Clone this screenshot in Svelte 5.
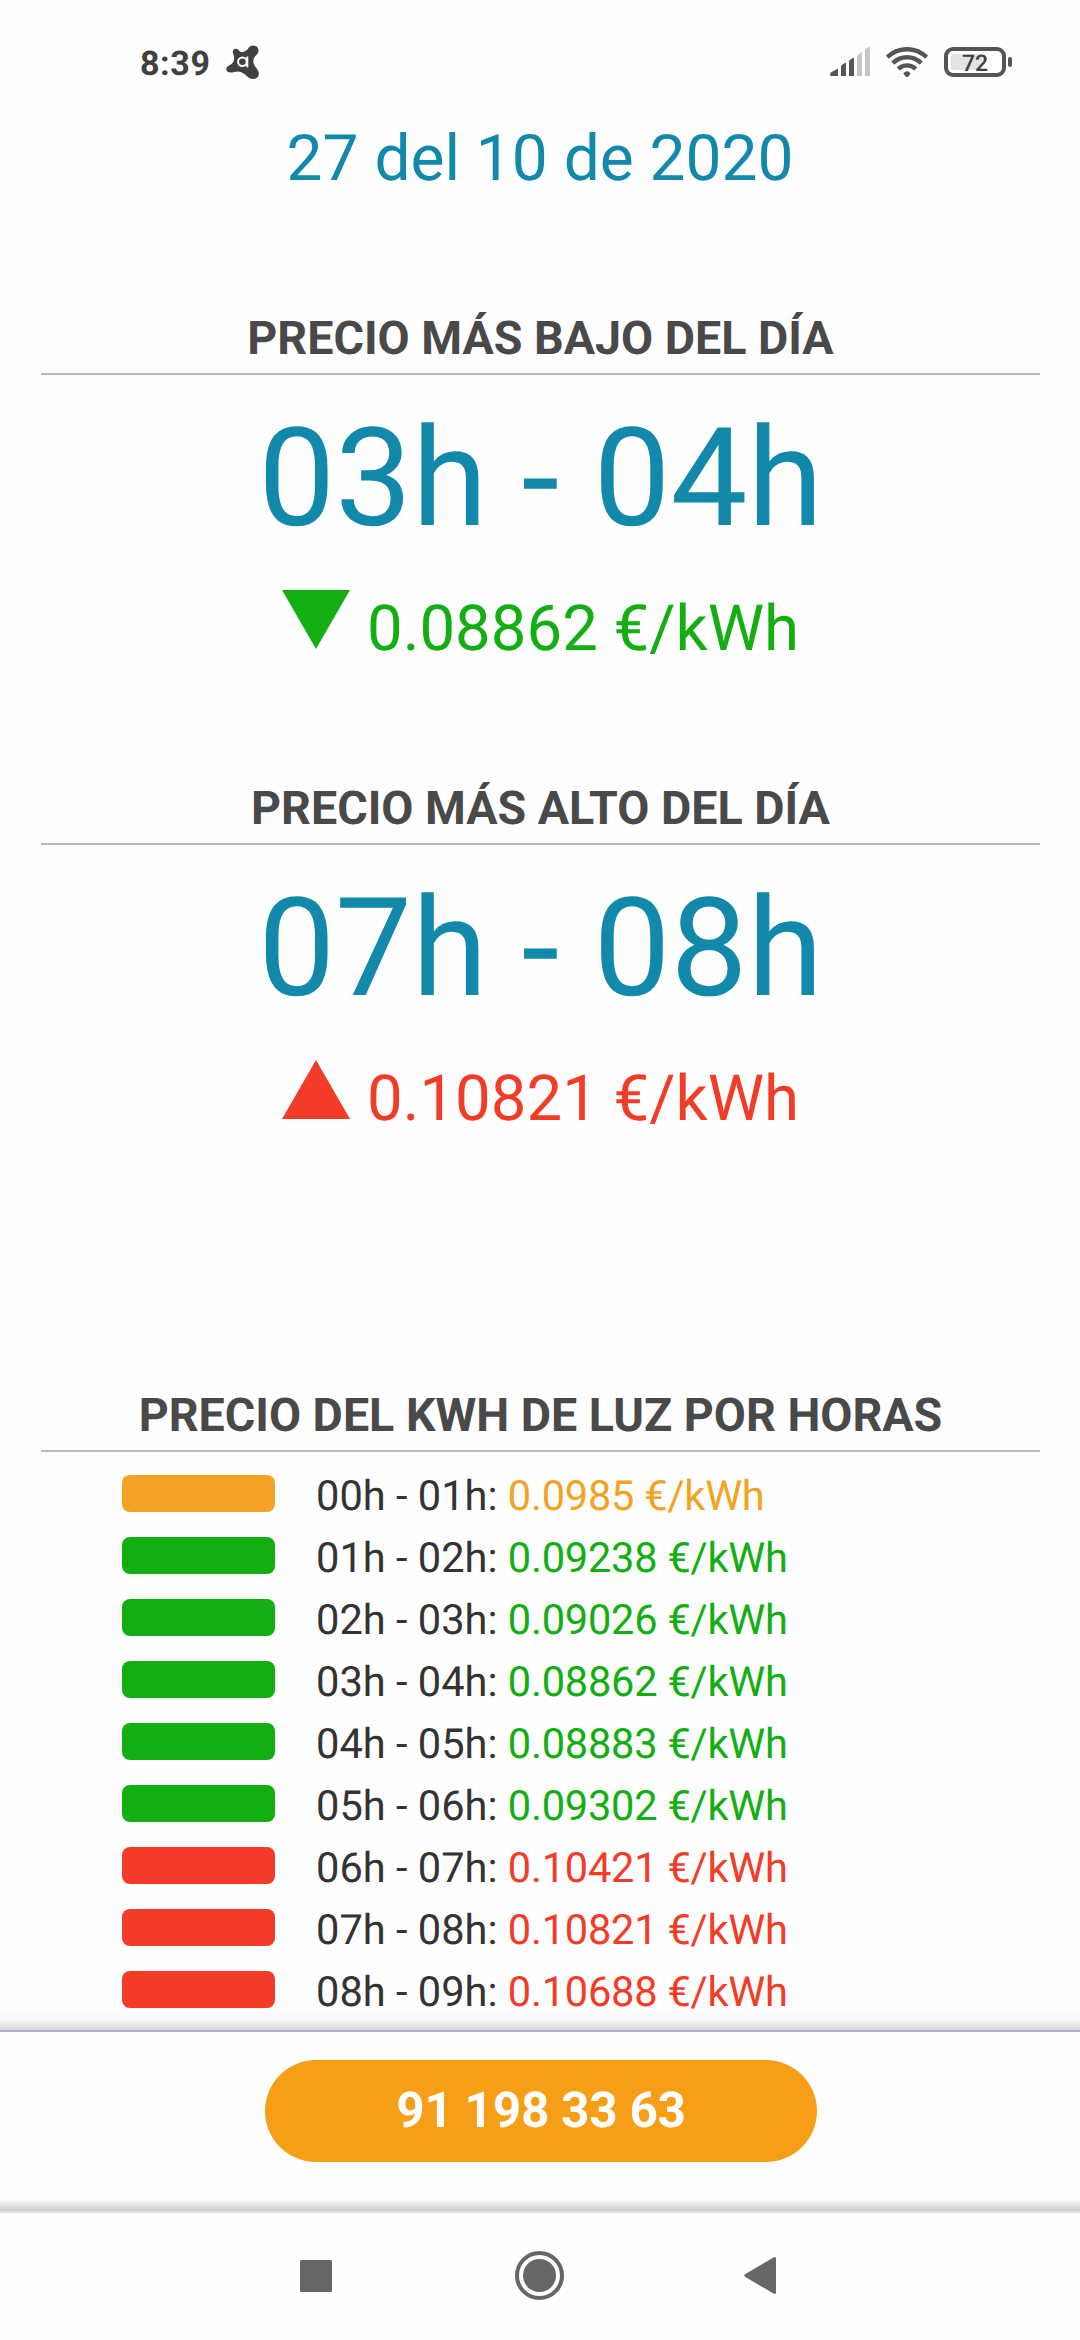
<script>
  const extremes = [
    { title: 'PRECIO MÁS BAJO DEL DÍA', hours: '03h - 04h', price: '0.08862', level: 'low' },
    { title: 'PRECIO MÁS ALTO DEL DÍA', hours: '07h - 08h', price: '0.10821', level: 'high' },
  ];
  const hourly = [
    { hours: '00h - 01h', price: '0.0985', level: 'mid' },
    { hours: '01h - 02h', price: '0.09238', level: 'low' },
    { hours: '02h - 03h', price: '0.09026', level: 'low' },
    { hours: '03h - 04h', price: '0.08862', level: 'low' },
    { hours: '04h - 05h', price: '0.08883', level: 'low' },
    { hours: '05h - 06h', price: '0.09302', level: 'low' },
    { hours: '06h - 07h', price: '0.10421', level: 'high' },
    { hours: '07h - 08h', price: '0.10821', level: 'high' },
    { hours: '08h - 09h', price: '0.10688', level: 'high' },
  ];
</script>

<div class="screen">
  <header class="status">
    <div class="left">
      <span class="clock">8:39</span>
      <svg class="app" viewBox="0 0 34 34" width="34" height="34">
        <path fill="#404040" d="M7 8C5.800 4 11 2 13 5.500C15 8.500 20 7 22.500 3C25 -1 32 0 32.500 5C33 9 29.500 10 28 13C26 17 28.500 21 31 24C35 29 32 34 27 34C22 34 20 29 15 27C11 25.500 8 27.500 4.500 27.500C-0.500 27.500 -1 22.500 3 20.500C8 18 9.500 14 7 8Z" />
        <circle cx="16.400" cy="16.800" r="4.300" fill="none" stroke="#fff" stroke-width="2" />
        <path d="M21.300 11.500V22.300" stroke="#fff" stroke-width="2" />
      </svg>
    </div>
    <div class="right">
      <svg class="signal" viewBox="0 0 40 29" width="40" height="29">
        <path fill="#555" d="M0 27.500Q0 26 1.200 25.200L8 21.500V29H1.500Q0 29 0 27.500ZM11 19.500Q11 18.500 12 17.800L16 15.500V29H11ZM19 14.500Q19 13.500 20 12.800L24 10.500V29H19Z" />
        <path fill="#c6c6c6" d="M27 9.500Q27 8.500 28 7.800L32 5V29H27ZM35 4Q35 2.500 36 1.800L38 0.300Q40 -0.500 40 1V29H35Z" />
      </svg>
      <svg class="wifi" viewBox="0 0 42 30" width="42" height="30">
        <g fill="none" stroke="#555" stroke-width="4.400">
          <path d="M1.300 10.200C12.500 -.500 29.500 -.500 40.700 10.200" />
          <path d="M6.800 16.100C15 8.300 27 8.300 35.200 16.100" />
          <path d="M12.300 22C17.300 17.200 24.700 17.200 29.700 22" />
        </g>
        <path fill="#555" d="M17.300 26.200Q21 22.500 24.700 26.200L22.600 29.200Q21 31 19.400 29.200Z" />
      </svg>
      <svg class="battery" viewBox="0 0 68 30" width="68" height="30">
        <rect x="2" y="2" width="58" height="26" rx="7" fill="#fff" stroke="#555" stroke-width="4" />
        <path fill="#e3e3e3" d="M10 7H38V23H10Q7 23 7 20V10Q7 7 10 7Z" />
        <rect x="64" y="10" width="4" height="10" rx="2" fill="#555" />
        <text x="31" y="24" text-anchor="middle" class="charge">72</text>
      </svg>
    </div>
  </header>

  <main>
    <div class="date">27 del 10 de 2020</div>
    {#each extremes as item}
      <section class="extreme">
        <h2>{item.title}</h2>
        <div class="hours">{item.hours}</div>
        <div class="price {item.level}">
          <svg viewBox="0 0 68 59" width="68" height="59">
            <path fill="currentColor" d={item.level === 'low' ? 'M0 0H68L34 59Z' : 'M0 59H68L34 0Z'} />
          </svg>
          <span>{item.price} €/kWh</span>
        </div>
      </section>
    {/each}
    <section class="hourly">
      <h2>PRECIO DEL KWH DE LUZ POR HORAS</h2>
      <ul>
        {#each hourly as row}
          <li>
            <span class="bar {row.level}"></span>
            <span class="label">{row.hours}: <span class="amount {row.level}">{row.price} €/kWh</span></span>
          </li>
        {/each}
      </ul>
    </section>
  </main>

  <div class="fade"></div>
  <footer>
    <button>91 198 33 63</button>
    <div class="shade"></div>
  </footer>
  <nav>
    <svg viewBox="0 0 32 32" width="32" height="32"><rect width="32" height="32" rx="1.500" fill="#666" /></svg>
    <svg class="home" viewBox="0 0 49 49" width="49" height="49">
      <circle cx="24.500" cy="24.500" r="22.500" fill="none" stroke="#666" stroke-width="4" />
      <circle cx="24.500" cy="24.500" r="16.500" fill="#666" />
    </svg>
    <svg class="back" viewBox="0 0 32 37" width="32" height="37">
      <path fill="#666" d="M1 17.300L29.500 .400Q32 -.600 32 1.500V35.500Q32 37.600 29.500 36.600L1 19.700Q-.500 18.500 1 17.300Z" />
    </svg>
  </nav>
</div>

<style>
  :global(body) {
    margin: 0;
    background: #fefefe;
  }
  .screen {
    width: 1080px;
    height: 2340px;
    overflow: hidden;
    display: flex;
    flex-direction: column;
    background: #fefefe;
    font-family: Roboto, 'Liberation Sans', sans-serif;
    text-rendering: geometricPrecision;
  }
  svg {
    display: block;
    flex: none;
  }
  .status {
    flex: none;
    height: 121px;
    box-sizing: border-box;
    padding: 45px 68px 0 140px;
    display: flex;
    justify-content: space-between;
    align-items: flex-start;
  }
  .left,
  .right {
    display: flex;
    align-items: flex-start;
  }
  .clock {
    width: 86px;
    font-size: 34px;
    line-height: 38px;
    font-weight: 700;
    letter-spacing: 0.6px;
    color: #404040;
    white-space: nowrap;
  }
  .charge {
    font-size: 23px;
    font-weight: 500;
    fill: #404040;
  }
  .signal,
  .wifi,
  .battery {
    margin-top: 2px;
  }
  .wifi {
    margin-left: 16px;
  }
  .battery {
    margin-left: 16px;
  }
  main {
    height: 1909px;
    flex: none;
    overflow: hidden;
  }
  .date {
    font-size: 64px;
    line-height: 76px;
    text-align: center;
    color: #1288ab;
  }
  section {
    margin: 0 40px 0 41px;
  }
  .extreme {
    margin-top: 111px;
    height: 357px;
  }
  .extreme + .extreme {
    margin-top: 113px;
  }
  h2 {
    margin: 0;
    padding: 1px 0 4px;
    border-bottom: 2px solid #b9b9b9;
    font-size: 46.600px;
    line-height: 60px;
    font-weight: 700;
    text-align: center;
    color: #494949;
    white-space: nowrap;
  }
  .hours {
    margin-top: 24px;
    font-size: 137px;
    line-height: 160px;
    text-align: center;
    color: #1288ab;
    white-space: nowrap;
  }
  .price {
    margin-top: 31px;
    display: flex;
    justify-content: center;
    align-items: flex-start;
    gap: 17px;
    font-size: 63.500px;
    line-height: 78px;
    white-space: nowrap;
  }
  .low {
    color: #12ae12;
  }
  .mid {
    color: #f3a323;
  }
  .high {
    color: #f23c27;
  }
  .hourly {
    margin-top: 250px;
  }
  ul {
    list-style: none;
    margin: 13px 0 0;
    padding: 0 0 0 81px;
  }
  li {
    height: 62px;
    display: flex;
    gap: 41px;
  }
  .bar {
    width: 153px;
    height: 37px;
    margin-top: 10px;
    border-radius: 8px;
    background: currentColor;
  }
  .label {
    font-size: 41.600px;
    line-height: 64px;
    color: #333;
    white-space: nowrap;
  }
  .amount {
    letter-spacing: -0.250px;
  }
  .fade {
    flex: none;
    height: 18px;
    margin-top: -18px;
    position: relative;
    background: linear-gradient(rgba(0, 0, 0, 0), rgba(0, 0, 0, 0.04) 50%, rgba(0, 0, 0, 0.16));
  }
  footer {
    flex: none;
    height: 183px;
    box-sizing: border-box;
    border-top: 2px solid #a5b3d9;
    border-bottom: 2px solid #e0e0e0;
    padding-top: 28px;
    display: flex;
    flex-direction: column;
    align-items: center;
    justify-content: space-between;
  }
  button {
    width: 552px;
    height: 102px;
    margin: 0 0 0 2px;
    padding: 1px 0 0;
    border: 0;
    border-radius: 51px;
    background: #f59e16;
    color: #fff;
    font: 700 49.500px/101px Roboto, 'Liberation Sans', sans-serif;
    letter-spacing: -0.250px;
    text-rendering: geometricPrecision;
  }
  .shade {
    width: 100%;
    height: 12px;
    background: linear-gradient(rgba(0, 0, 0, 0), rgba(0, 0, 0, 0.2));
  }
  nav {
    flex: 1;
    display: flex;
    align-items: center;
    padding: 0 0 2px 300px;
  }
  .home {
    margin-left: 183px;
  }
  .back {
    margin-left: 180px;
  }
</style>
